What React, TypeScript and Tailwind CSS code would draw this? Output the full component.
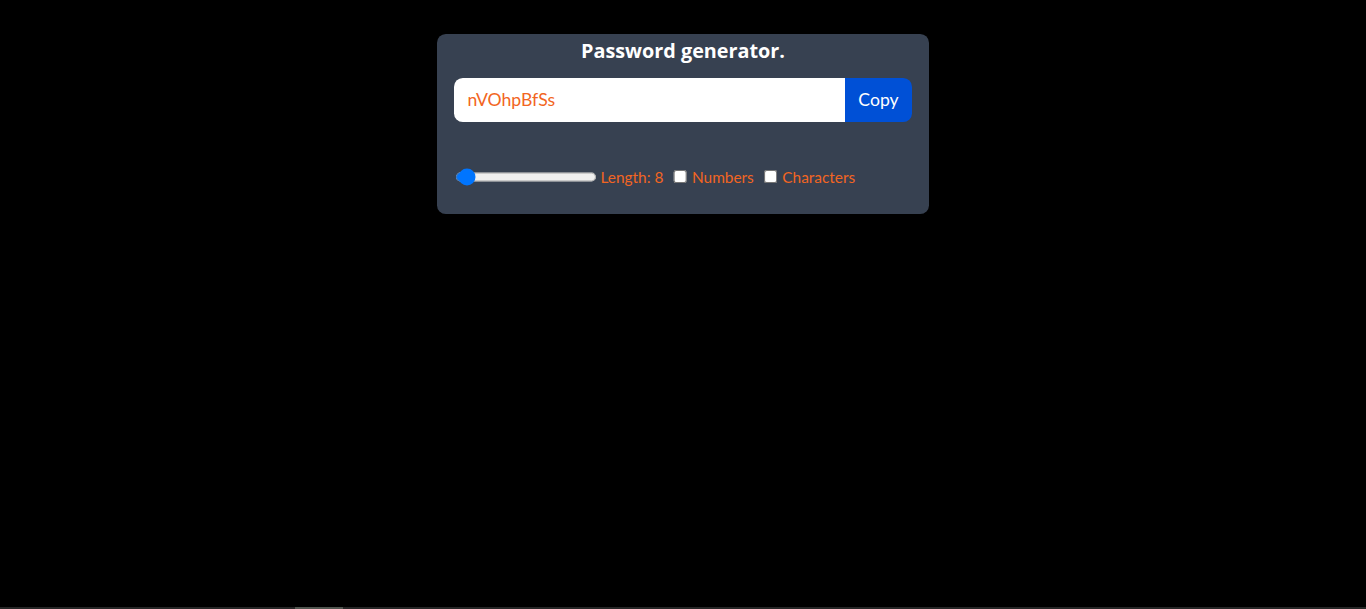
import { useState } from "react";

// Generatore di password: card centrata, la pagina originale era a zoom 110%.

export default function App() {
  const [length, setLength] = useState(8);
  const [numbers, setNumbers] = useState(false);
  const [chars, setChars] = useState(false);
  const password = "nVOhpBfSs";

  return (
    <div className="flex min-h-[609px] flex-col bg-black font-['Lato',sans-serif]">
      <div className="flex-1">
        <div className="[zoom:1.1]">
          <div className="mx-auto mt-[31px] w-full max-w-md rounded-lg bg-[#374151] px-4 pb-6 text-[#f26522]">
            <h1 className="pt-[2px] text-center font-['Open_Sans',sans-serif] text-lg leading-7 font-bold text-white">
              Password generator.
            </h1>
            <div className="mt-[10px] flex overflow-hidden rounded-lg">
              <input
                type="text"
                value={password}
                readOnly
                placeholder="Password"
                className="w-full bg-white px-3 py-2 text-base leading-6 text-[#f26522] outline-none"
              />
              <button className="shrink-0 bg-[#0050d6] px-3 py-2 text-base leading-6 text-white">
                Copy
              </button>
            </div>
            <div className="mt-[40px] flex items-center gap-x-2 text-sm leading-5">
              <div className="flex items-center">
                <input
                  type="range"
                  min={6}
                  max={100}
                  value={length}
                  onChange={(e) => setLength(Number(e.target.value))}
                  className="mr-[3px] ml-px cursor-pointer"
                />
                <label>Length: {length}</label>
              </div>
              <div className="flex items-center">
                <input
                  type="checkbox"
                  id="numberInput"
                  checked={numbers}
                  onChange={() => setNumbers((p) => !p)}
                  className="mr-[4px] ml-px"
                />
                <label htmlFor="numberInput">Numbers</label>
              </div>
              <div className="flex items-center">
                <input
                  type="checkbox"
                  id="characterInput"
                  checked={chars}
                  onChange={() => setChars((p) => !p)}
                  className="mr-[4px] ml-px"
                />
                <label htmlFor="characterInput">Characters</label>
              </div>
            </div>
          </div>
        </div>
      </div>
      <div className="flex h-[2px] bg-[#262626]">
        <div className="ml-[295px] w-[48px] bg-[#50554f]" />
      </div>
    </div>
  );
}
